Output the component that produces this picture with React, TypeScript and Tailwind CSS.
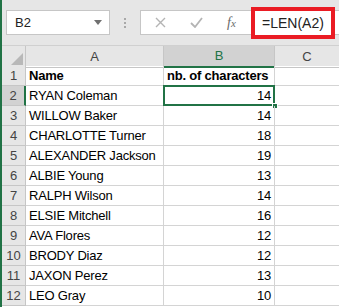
import React from "react";

const rows: [string, number][] = [
  ["RYAN Coleman", 14],
  ["WILLOW Baker", 14],
  ["CHARLOTTE Turner", 18],
  ["ALEXANDER Jackson", 19],
  ["ALBIE Young", 13],
  ["RALPH Wilson", 14],
  ["ELSIE Mitchell", 16],
  ["AVA Flores", 12],
  ["BRODY Diaz", 12],
  ["JAXON Perez", 13],
  ["LEO Gray", 10],
];

const font = { fontFamily: '"Liberation Sans", Arial, sans-serif' };

export default function App() {
  return (
    <div
      className="w-[339px] h-[307px] overflow-hidden bg-white border-l-2 border-[#217346] text-[13px] text-black"
      style={font}
    >
      {/* formula bar */}
      <div className="h-[46px] bg-[#e6e6e6] flex items-center pl-[4px] border-b border-[#d0d0d0]">
        <div className="w-[104px] h-[25px] bg-white border border-[#c6c6c6] flex items-center pl-[8px] pr-[7px] justify-between">
          <span className="text-[#222]">B2</span>
          <svg width="8" height="5" viewBox="0 0 8 5">
            <path d="M0 0h8L4 5z" fill="#707070" />
          </svg>
        </div>
        <div className="w-[30px] flex flex-col items-center gap-[2px]">
          <span className="w-[2px] h-[2px] bg-[#a8a8a8]" />
          <span className="w-[2px] h-[2px] bg-[#a8a8a8]" />
          <span className="w-[2px] h-[2px] bg-[#a8a8a8]" />
        </div>
        <div className="relative flex-1 h-[25px] bg-white border border-[#c6c6c6] border-r-0 flex items-center">
          <div className="w-[112px] flex items-center pl-[14px] gap-[24px]">
            <svg width="11" height="11" viewBox="0 0 11 11">
              <path d="M1 1l9 9M10 1l-9 9" stroke="#b4b4b4" strokeWidth="1.4" />
            </svg>
            <svg width="13" height="11" viewBox="0 0 13 11">
              <path d="M1 6l4 4L12 1" stroke="#b4b4b4" strokeWidth="1.8" fill="none" />
            </svg>
            <span
              className="italic text-[14px] text-[#6a6a6a] leading-none"
              style={{ fontFamily: '"Liberation Serif", "Times New Roman", serif' }}
            >
              f<span className="text-[11px]">x</span>
            </span>
          </div>
          <div className="absolute left-[110px] top-[-4px] w-[84px] h-[32px] border-[4px] border-[#ea1c24] bg-white flex items-center pl-[7px]">
            <span className="text-[14px] text-[#222]">=LEN(A2)</span>
          </div>
        </div>
      </div>

      {/* column headers */}
      <div className="grid grid-cols-[24px_138px_111px_64px] h-[20px] bg-[#e6e6e6] text-[#444]">
        <div className="border-r border-b border-[#c6c6c6] flex items-end justify-end pr-[2px] pb-[2px]">
          <svg width="12" height="12" viewBox="0 0 12 12">
            <path d="M12 0v12H0z" fill="#b8b8b8" />
          </svg>
        </div>
        <div className="border-r border-b border-[#c6c6c6] flex items-center justify-center">A</div>
        <div className="bg-[#d2d2d2] border-r border-[#c6c6c6] border-b-2 border-b-[#217346] flex items-center justify-center text-[#217346]">
          B
        </div>
        <div className="border-b border-[#c6c6c6] flex items-center justify-center">C</div>
      </div>

      {/* rows */}
      <div className="grid grid-cols-[24px_138px_111px_64px] auto-rows-[20px] tracking-[-0.2px]">
        <div className="bg-[#e6e6e6] border-r border-b border-[#c6c6c6] flex items-center justify-center text-[#444] tracking-normal">1</div>
        <div className="border-r border-b border-[#d4d4d4] flex items-center pl-[3px] font-bold">Name</div>
        <div className="border-r border-b border-[#d4d4d4] flex items-center pl-[3px] font-bold">nb. of characters</div>
        <div className="border-b border-[#d4d4d4]" />
        {rows.map(([name, n], i) => {
          const sel = i === 0;
          return (
            <React.Fragment key={name}>
              <div
                className={
                  sel
                    ? "bg-[#d2d2d2] border-r-2 border-r-[#217346] border-b border-b-[#c6c6c6] flex items-center justify-center text-[#444] tracking-normal"
                    : "bg-[#e6e6e6] border-r border-b border-[#c6c6c6] flex items-center justify-center text-[#444] tracking-normal"
                }
              >
                {i + 2}
              </div>
              <div className="border-r border-b border-[#d4d4d4] flex items-center pl-[3px] whitespace-nowrap">{name}</div>
              <div className="relative border-r border-b border-[#d4d4d4] flex items-center justify-end pr-[3px]">
                {n}
                {sel && (
                  <>
                    <div className="absolute left-[-1px] top-[-1px] right-[-1px] bottom-[-1px] border-2 border-[#217346]" />
                    <div className="absolute right-[-4px] bottom-[-4px] w-[6px] h-[6px] bg-[#217346] border border-white" />
                  </>
                )}
              </div>
              <div className="border-b border-[#d4d4d4]" />
            </React.Fragment>
          );
        })}
      </div>
    </div>
  );
}
